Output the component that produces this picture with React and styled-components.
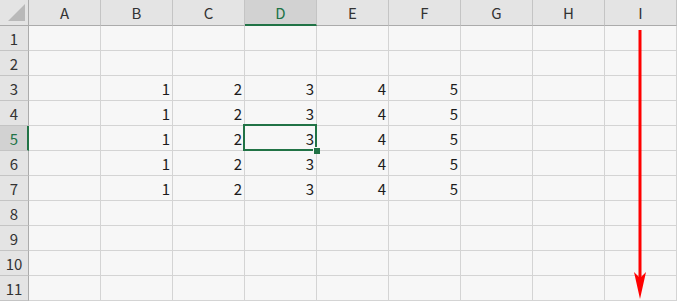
import React from 'react';
import styled, { createGlobalStyle, css } from 'styled-components';

const GlobalStyle = createGlobalStyle`
  html, body {
    margin: 0;
    padding: 0;
    background: #f7f7f7;
  }
`;

const COLS = ['A', 'B', 'C', 'D', 'E', 'F', 'G', 'H', 'I'];
const ROW_COUNT = 11;
const ACTIVE_COL = 'D';
const ACTIVE_ROW = 5;

const green = '#217346';

const Sheet = styled.div`
  position: relative;
  display: grid;
  grid-template-columns: 29px repeat(9, 72px);
  grid-template-rows: 26px repeat(11, 25px);
  width: 677px;
  height: 301px;
  overflow: hidden;
  background: #f7f7f7;
  font-family: 'Noto Sans CJK JP', 'Noto Sans', sans-serif;
  font-size: 15px;
  color: #1c1c1c;
`;

const Corner = styled.div`
  position: relative;
  background: #e4e4e4;
  border-right: 1px solid #ababab;
  border-bottom: 1px solid #ababab;
  box-sizing: border-box;

  svg {
    position: absolute;
    left: 7px;
    top: 4px;
  }
`;

const ColHead = styled.div`
  display: flex;
  align-items: center;
  justify-content: center;
  box-sizing: border-box;
  background: ${p => (p.$active ? '#d2d2d2' : '#e4e4e4')};
  color: ${p => (p.$active ? green : '#333')};
  border-right: 1px solid #c4c4c4;
  border-bottom: ${p => (p.$active ? `2px solid ${green}` : '1px solid #ababab')};
  font-size: 15px;
  padding-top: ${p => (p.$active ? '1px' : '0')};
`;

const RowHead = styled.div`
  display: flex;
  align-items: center;
  justify-content: center;
  box-sizing: border-box;
  background: ${p => (p.$active ? '#d2d2d2' : '#e4e4e4')};
  color: ${p => (p.$active ? green : '#333')};
  border-right: ${p => (p.$active ? `2px solid ${green}` : '1px solid #ababab')};
  border-bottom: 1px solid #c4c4c4;
  font-size: 15px;
  padding-left: ${p => (p.$active ? '1px' : '0')};
`;

const Cell = styled.div`
  position: relative;
  display: flex;
  align-items: center;
  justify-content: flex-end;
  box-sizing: border-box;
  padding-right: 2px;
  border-right: 1px solid #d4d4d4;
  border-bottom: 1px solid #d4d4d4;

  ${p =>
    p.$selected &&
    css`
      z-index: 1;
      &::before {
        content: '';
        position: absolute;
        left: -2px;
        top: -2px;
        right: -1px;
        bottom: -1px;
        border: 2px solid ${green};
        pointer-events: none;
      }
      &::after {
        content: '';
        position: absolute;
        right: -4px;
        bottom: -4px;
        width: 6px;
        height: 6px;
        background: ${green};
        border-top: 1px solid #f7f7f7;
        border-left: 1px solid #f7f7f7;
      }
    `}
`;

const Arrow = styled.svg`
  position: absolute;
  left: 632px;
  top: 28px;
  z-index: 2;
  pointer-events: none;
`;

const data = {
  3: { B: 1, C: 2, D: 3, E: 4, F: 5 },
  4: { B: 1, C: 2, D: 3, E: 4, F: 5 },
  5: { B: 1, C: 2, D: 3, E: 4, F: 5 },
  6: { B: 1, C: 2, D: 3, E: 4, F: 5 },
  7: { B: 1, C: 2, D: 3, E: 4, F: 5 },
};

export default function App() {
  const rows = Array.from({ length: ROW_COUNT }, (_, i) => i + 1);
  return (
    <>
      <GlobalStyle />
      <Sheet>
        <Corner>
          <svg width="19" height="18" viewBox="0 0 19 18">
            <polygon points="18,0 18,17 1,17" fill="#b9b9b9" />
          </svg>
        </Corner>
        {COLS.map(c => (
          <ColHead key={c} $active={c === ACTIVE_COL}>
            {c}
          </ColHead>
        ))}
        {rows.map(r => (
          <React.Fragment key={r}>
            <RowHead $active={r === ACTIVE_ROW}>{r}</RowHead>
            {COLS.map(c => (
              <Cell key={c} $selected={r === ACTIVE_ROW && c === ACTIVE_COL}>
                {data[r] && data[r][c]}
              </Cell>
            ))}
          </React.Fragment>
        ))}
        <Arrow width="16" height="273" viewBox="0 0 16 273">
          <line x1="8" y1="2" x2="8" y2="252" stroke="#ff0000" strokeWidth="3" />
          <polygon points="8,271 2,244 8,250 14,244" fill="#ff0000" />
        </Arrow>
      </Sheet>
    </>
  );
}
